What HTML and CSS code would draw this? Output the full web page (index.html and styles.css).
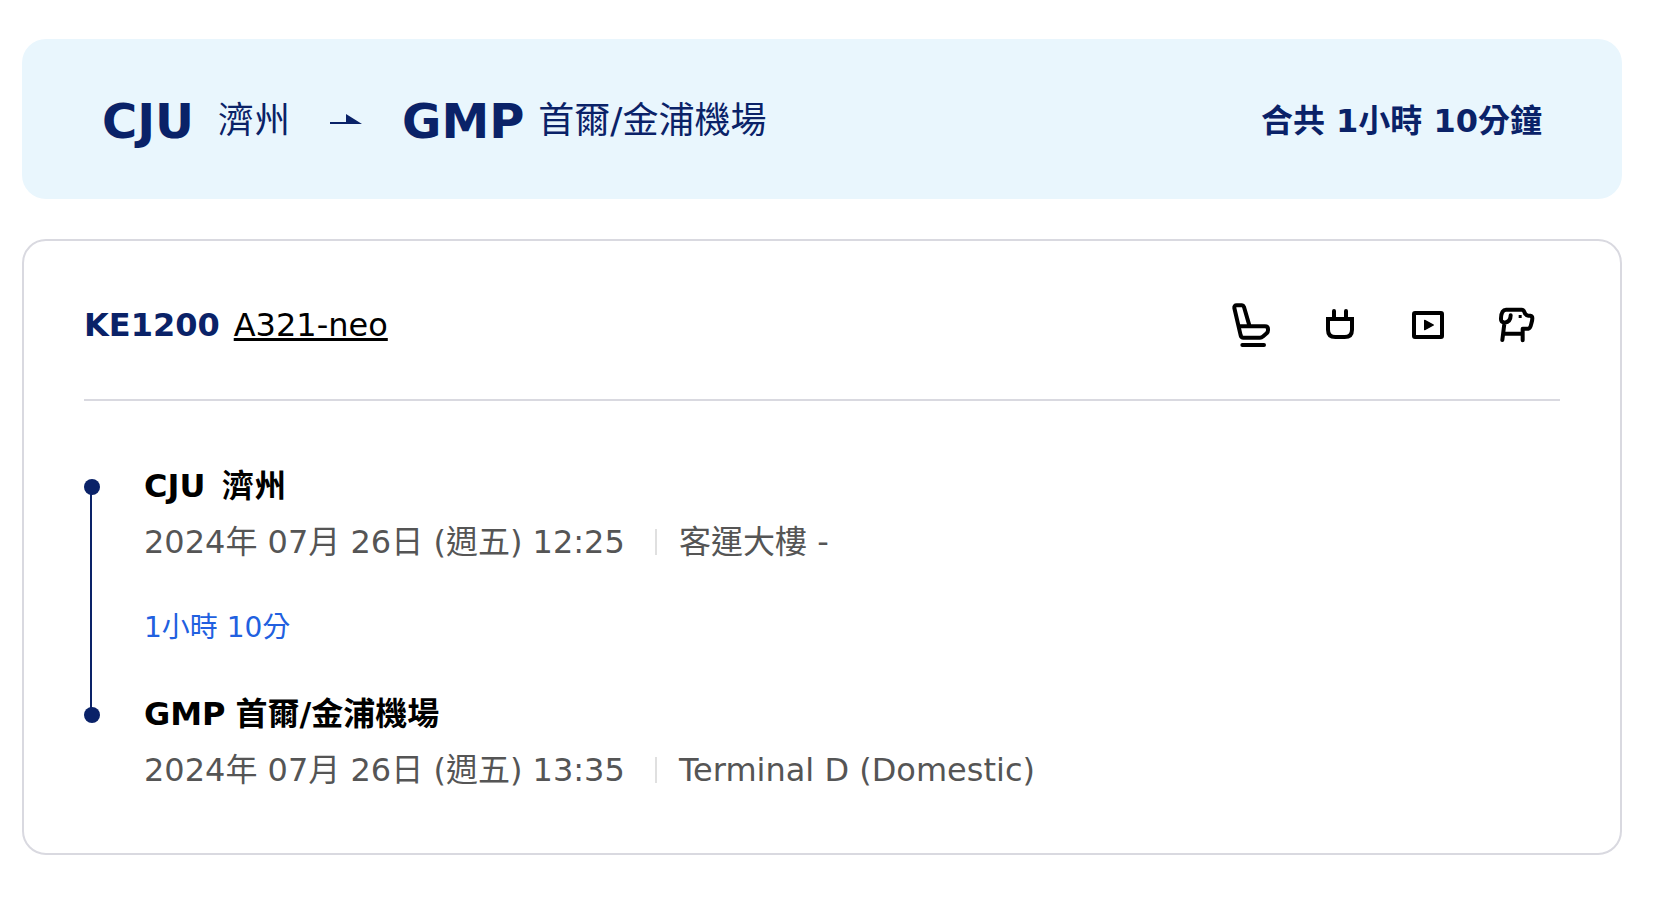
FILE: index.html
```html
<!DOCTYPE html>
<html lang="zh-Hant">
<head>
<meta charset="utf-8">
<meta name="viewport" content="width=device-width, initial-scale=1">
<title>CJU 濟州 – GMP 首爾/金浦機場</title>
<link rel="stylesheet" href="styles.css">
</head>
<body>
<main class="itinerary">
  <header class="route">
    <h1 class="route-title">
      <span class="airport"><b class="code">CJU</b><span class="city">濟州</span></span>
      <svg class="arrow" viewBox="0 0 32 14" role="img" aria-label="至"><path d="M0 8H16V0L32 10H0Z"/></svg>
      <span class="airport"><b class="code">GMP</b><span class="city">首爾/金浦機場</span></span>
    </h1>
    <p class="total">合共 1小時 10分鐘</p>
  </header>

  <section class="segment">
    <div class="segment-head">
      <h2 class="flight"><span class="flight-no">KE1200</span><a class="aircraft" href="#aircraft">A321-neo</a></h2>
      <ul class="amenities">
        <li><svg class="icon" viewBox="0 0 144 144" role="img" aria-label="座椅"><path d="M64 73 48 18Q46 13 42 13H26Q18 13 19 21L38 103Q40 110 46 110H96Q101 110 104 107L116 97Q120 93 120 88V84Q120 76 111 76H33M43 132H108"/></svg></li>
        <li><svg class="icon" viewBox="0 0 144 144" role="img" aria-label="電源"><path class="miter" d="M36 54H108V86Q108 108 86 108H58Q36 108 36 86Z"/><path d="M54 30V52M90 30V52"/></svg></li>
        <li><svg class="icon" viewBox="0 0 144 144" role="img" aria-label="影音娛樂"><rect x="30" y="36" width="84" height="72" rx="3"/><path class="solid" d="M62 58 88 72 62 86Z"/></svg></li>
        <li><svg class="icon" viewBox="0 0 144 144" role="img" aria-label="寵物"><path d="M38 65Q26 64 27 52Q28 26 42 26H89Q94 26 96 31Q99 43 109 44H115Q121 45 121 52Q121 59 118 68Q115 82 109 83H92V118M38 65Q56 63 56 43M37 68 31 117M36 98H91"/><rect class="eye" x="80" y="42" width="9" height="9"/></svg></li>
      </ul>
    </div>

    <ol class="timeline">
      <li class="stop">
        <h3 class="stop-name"><span class="stop-code">CJU</span> <span>濟州</span></h3>
        <p class="stop-info"><time class="when" datetime="2024-07-26T12:25">2024年 07月 26日 (週五) 12:25</time><span class="terminal">客運大樓 -</span></p>
        <p class="duration">1小時 10分</p>
      </li>
      <li class="stop">
        <h3 class="stop-name"><span class="stop-code">GMP</span> <span>首爾/金浦機場</span></h3>
        <p class="stop-info"><time class="when" datetime="2024-07-26T13:35">2024年 07月 26日 (週五) 13:35</time><span class="terminal">Terminal D (Domestic)</span></p>
      </li>
    </ol>
  </section>
</main>
</body>
</html>
```
FILE: styles.css
```css
:root {
  --navy: #0a2268;
  --line: #d9d9e0;
}

* { box-sizing: border-box; }

body {
  margin: 0;
  background: #fff;
  color: #000;
  font-family: Verdana, "DejaVu Sans", "Noto Sans CJK TC", sans-serif;
  font-size: 32px;
  line-height: 56px;
}

h1, h2, h3, p, ul, ol { margin: 0; padding: 0; font-size: inherit; }
ul, ol { list-style: none; }

.itinerary {
  display: flex;
  flex-direction: column;
  gap: 40px;
  padding: 39px 46px 40px 22px;
}

.route {
  display: flex;
  align-items: center;
  justify-content: space-between;
  min-height: 160px;
  padding: 44px 80px 40px;
  border-radius: 24px;
  background: #e9f6fd;
  color: var(--navy);
}

.route-title {
  display: flex;
  align-items: center;
  gap: 40px;
  font-weight: 400;
}

.airport { display: flex; align-items: center; gap: 14px; }
.code { min-width: 102px; font-size: 48px; font-weight: 700; }
.city { font-size: 36px; }
.arrow { width: 32px; height: 14px; fill: currentColor; }
.total { font-weight: 700; }

.segment {
  padding: 0 60px 55px;
  border: 2px solid var(--line);
  border-radius: 24px;
}

.segment-head {
  display: flex;
  align-items: center;
  justify-content: space-between;
  padding: 56px 0 46px;
  border-bottom: 2px solid var(--line);
}

.flight { display: flex; gap: 14px; font-weight: 400; }
.flight-no { color: var(--navy); font-weight: 700; }
.aircraft {
  color: inherit;
  text-decoration-thickness: 3px;
  text-underline-offset: 2px;
  text-decoration-skip-ink: none;
}

.amenities { display: flex; }
.amenities li { display: flex; justify-content: center; width: 88px; }
.icon {
  width: 48px;
  height: 48px;
  fill: none;
  stroke: currentColor;
  stroke-width: 12;
  stroke-linecap: round;
  stroke-linejoin: round;
}
.icon .miter { stroke-linejoin: miter; }
.icon .solid { fill: currentColor; stroke-width: 4; }
.icon .eye { fill: currentColor; stroke: none; }

.timeline { padding-top: 57px; }
.stop { position: relative; padding-left: 60px; }

.stop::before {
  content: "";
  position: absolute;
  top: 21px;
  left: 0;
  width: 16px;
  height: 16px;
  border-radius: 50%;
  background: var(--navy);
}

.stop:not(:last-child)::after {
  content: "";
  position: absolute;
  top: 29px;
  bottom: -29px;
  left: 6px;
  width: 2px;
  background: var(--navy);
}

.stop-name { display: flex; gap: 10px; font-weight: 700; }
.stop-code { min-width: 68px; }
.stop-info { display: flex; align-items: center; color: #555; }
.when { min-width: 511px; }
.terminal { display: flex; align-items: center; gap: 22px; }
.terminal::before {
  content: "";
  width: 2px;
  height: 26px;
  background: #e0e0e0;
}
.duration { padding: 30px 0; color: #2160e0; font-size: 28px; }
```
